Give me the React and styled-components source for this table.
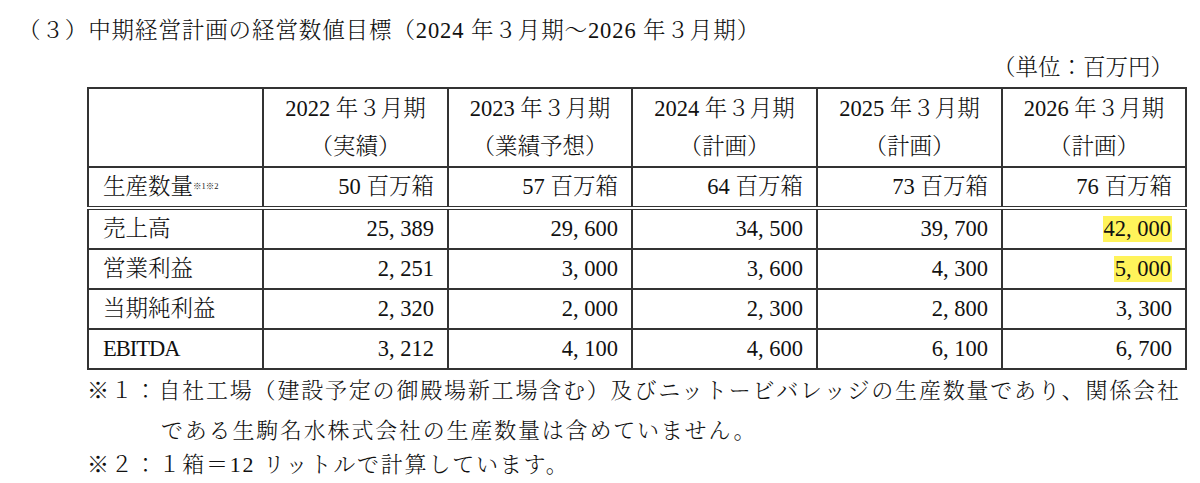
import React from "react";
import styled, { createGlobalStyle } from "styled-components";

const GlobalStyle = createGlobalStyle`
  html, body {
    margin: 0;
    padding: 0;
    background: #fff;
  }
  body {
    font-family: "Liberation Serif", "Noto Serif CJK JP", "Noto Sans CJK JP", serif;
    color: #111;
  }
`;

const Page = styled.div`
  width: 1200px;
  height: 483px;
  overflow: hidden;
  padding-top: 16px;
  box-sizing: border-box;
`;

const Title = styled.h1`
  margin: 0;
  padding-left: 18px;
  font-size: 22.5px;
  font-weight: 300;
  line-height: 30px;
  letter-spacing: 0.9px;
  white-space: nowrap;
`;

const Block = styled.div`
  margin-left: 87px;
  width: 1098px;
`;

const Unit = styled.div`
  margin-top: 7px;
  text-align: right;
  padding-right: 12px;
  font-size: 22.5px;
  font-weight: 300;
  line-height: 30px;
`;

const Table = styled.table`
  margin-top: 4px;
  width: 1098px;
  border-collapse: collapse;
  table-layout: fixed;
  font-size: 22.5px;
  font-weight: 300;
`;

const Cell = styled.td`
  border: 2px solid #333;
  height: 38px;
  padding: 0 13px 0 14px;
  line-height: 38px;
  text-align: ${(p) => (p.$align === "left" ? "left" : "right")};
  letter-spacing: ${(p) => (p.$condensed ? "-1px" : "0")};
  white-space: nowrap;
  vertical-align: middle;
`;

const HeadCell = styled.th`
  border: 2px solid #333;
  height: 77px;
  padding: 0;
  font-weight: 300;
  line-height: 38px;
  text-align: center;
  white-space: nowrap;
`;

const Row = styled.tr`
  & > td {
    border-bottom: ${(p) => (p.$double ? "4px double #333" : "2px solid #333")};
  }
`;

const Sup = styled.span`
  font-size: 8.5px;
  color: #222;
  vertical-align: 5px;
  line-height: 0;
  letter-spacing: 0;
`;

const Mark = styled.span`
  background: #fff35a;
  display: inline-block;
  line-height: 26px;
  padding: 0 1px;
`;

const Comma = styled.span`
  margin-right: 0.25em;
`;

const Notes = styled.div`
  margin-top: 1px;
  font-size: 22px;
  font-weight: 300;
  line-height: 40px;
  letter-spacing: 1.8px;
  white-space: nowrap;
`;

const Note = styled.div`
  padding-left: ${(p) => p.$indent}px;
  text-indent: -${(p) => p.$indent}px;
  & + & {
    margin-top: -6px;
  }
`;

const heads = [
  ["2022 年３月期", "（実績）"],
  ["2023 年３月期", "（業績予想）"],
  ["2024 年３月期", "（計画）"],
  ["2025 年３月期", "（計画）"],
  ["2026 年３月期", "（計画）"],
];

const rows = [
  { label: "売上高", values: ["25,389", "29,600", "34,500", "39,700", "42,000"], mark: true },
  { label: "営業利益", values: ["2,251", "3,000", "3,600", "4,300", "5,000"], mark: true },
  { label: "当期純利益", values: ["2,320", "2,000", "2,300", "2,800", "3,300"] },
  { label: "EBITDA", values: ["3,212", "4,100", "4,600", "6,100", "6,700"], latin: true },
];

const volumes = ["50", "57", "64", "73", "76"];

const Num = ({ value }) => {
  const parts = value.split(",");
  return (
    <>
      {parts.map((p, i) =>
        i < parts.length - 1 ? (
          <React.Fragment key={i}>
            {p}
            <Comma>,</Comma>
          </React.Fragment>
        ) : (
          <React.Fragment key={i}>{p}</React.Fragment>
        )
      )}
    </>
  );
};

export default function App() {
  return (
    <Page>
      <GlobalStyle />
      <Title>（３）中期経営計画の経営数値目標（2024 年３月期～2026 年３月期）</Title>
      <Block>
        <Unit>（単位：百万円）</Unit>
        <Table>
          <colgroup>
            <col style={{ width: 175 }} />
            <col style={{ width: 185 }} />
            <col style={{ width: 184 }} />
            <col style={{ width: 185 }} />
            <col style={{ width: 185 }} />
            <col style={{ width: 184 }} />
          </colgroup>
          <thead>
            <tr>
              <HeadCell />
              {heads.map(([a, b]) => (
                <HeadCell key={a}>
                  {a}
                  <br />
                  {b}
                </HeadCell>
              ))}
            </tr>
          </thead>
          <tbody>
            <Row $double>
              <Cell $align="left">
                生産数量<Sup>※1※2</Sup>
              </Cell>
              {volumes.map((v) => (
                <Cell key={v}>{v} 百万箱</Cell>
              ))}
            </Row>
            {rows.map((r) => (
              <Row key={r.label}>
                <Cell $align="left" $condensed={r.latin}>
                  {r.label}
                </Cell>
                {r.values.map((v, i) => (
                  <Cell key={i}>
                    {r.mark && i === r.values.length - 1 ? (
                      <Mark>
                        <Num value={v} />
                      </Mark>
                    ) : (
                      <Num value={v} />
                    )}
                  </Cell>
                ))}
              </Row>
            ))}
          </tbody>
        </Table>
        <Notes>
          <Note $indent={74}>
            ※１：自社工場（建設予定の御殿場新工場含む）及びニットービバレッジの生産数量であり、関係会社
            <br />
            である生駒名水株式会社の生産数量は含めていません。
          </Note>
          <Note $indent={74}>※２：１箱＝12 リットルで計算しています。</Note>
        </Notes>
      </Block>
    </Page>
  );
}
